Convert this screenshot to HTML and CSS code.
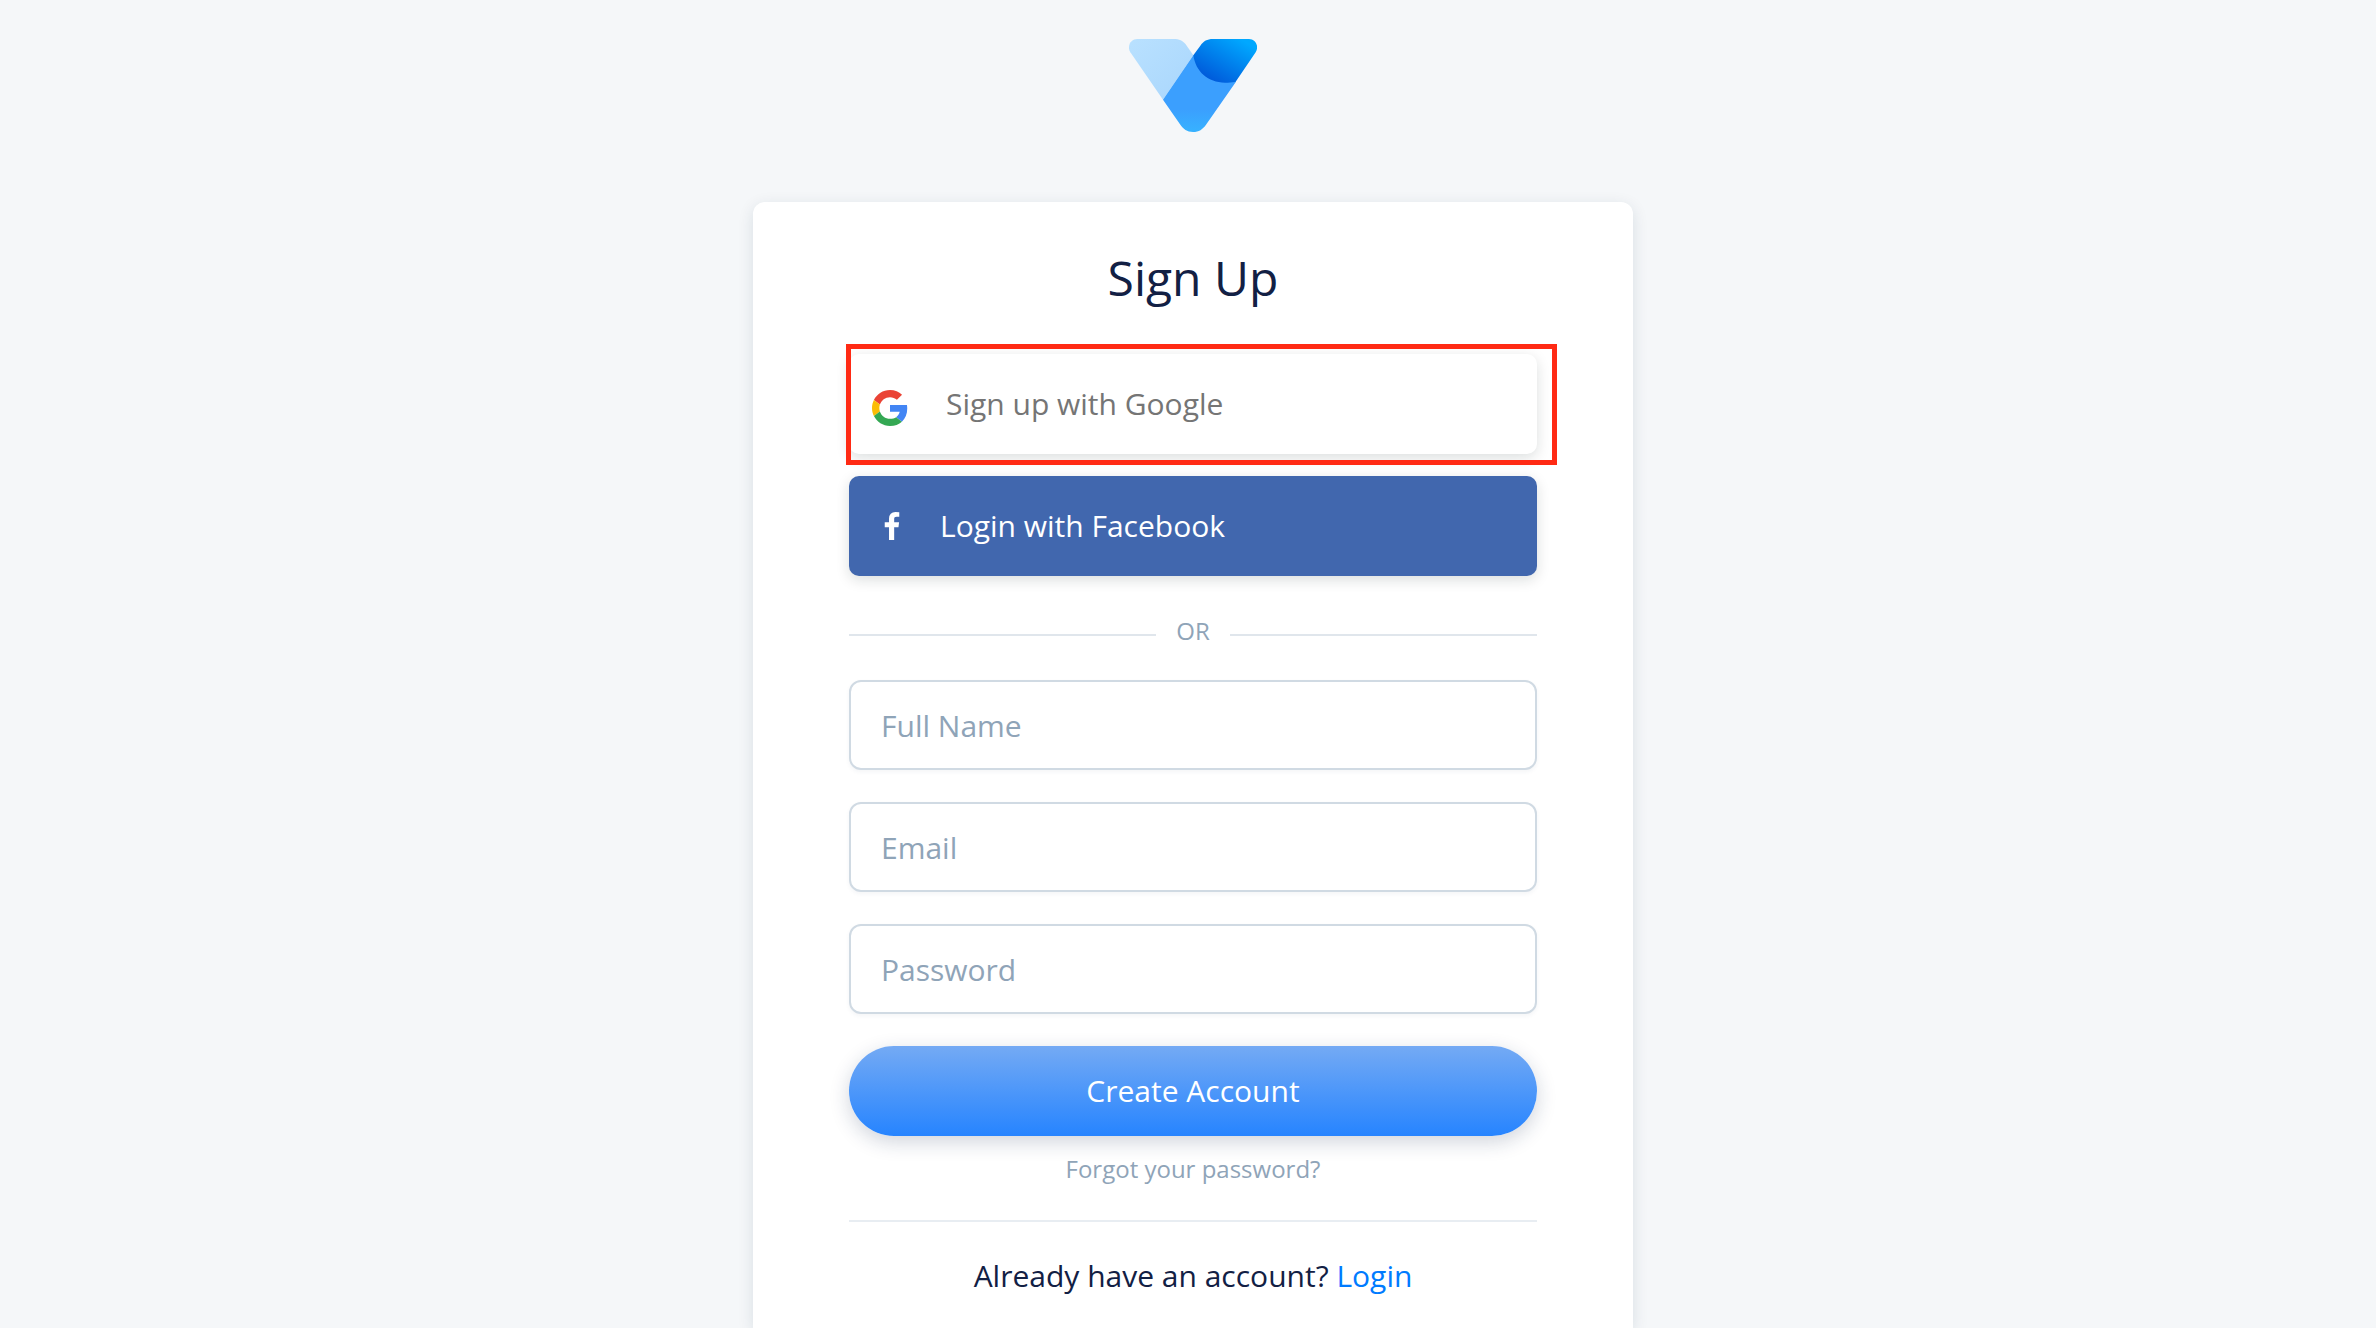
FILE: index.html
```html
<!DOCTYPE html>
<html lang="en">
<head>
  <meta charset="UTF-8">
  <meta name="viewport" content="width=device-width, initial-scale=1.0">
  <title>Sign Up</title>
  <link rel="stylesheet" href="styles.css">
</head>
<body>
  <div class="page">
    <svg class="logo" viewBox="87 57 384 279" aria-hidden="true">
      <defs>
        <linearGradient id="logoLeft" x1="0" y1="0" x2="1" y2="1">
          <stop offset="0" stop-color="#b9e1ff"/>
          <stop offset="1" stop-color="#a9d6fc"/>
        </linearGradient>
        <linearGradient id="logoMain" x1="0" y1="0" x2="0" y2="1">
          <stop offset="0.7" stop-color="#3b9ffe"/>
          <stop offset="1" stop-color="#37b2ff"/>
        </linearGradient>
        <linearGradient id="logoRight" x1="0.2" y1="0.85" x2="0.85" y2="0.1">
          <stop offset="0" stop-color="#005cdb"/>
          <stop offset="1" stop-color="#00a8ff"/>
        </linearGradient>
      </defs>
      <path fill="url(#logoLeft)" d="M112 57H221C238 57 248 62 257 73L280 106L189 239L91 97C80 79 92 57 112 57Z"/>
      <path fill="url(#logoMain)" d="M280 106L189 239L240 313C250 328 261 336 279 336C297 336 308 328 318 314L408 185L370 120Z"/>
      <path fill="url(#logoRight)" d="M280 106L301 77C311 63 321 57 339 57H447C467 57 478 79 467 97L407 185C395 187 386 188 375 188C324 188 287 155 280 106Z"/>
    </svg>

    <main class="card">
      <h1>Sign Up</h1>

      <div class="highlight">
        <button class="social google" type="button">
          <svg viewBox="0 0 48 48" aria-hidden="true">
            <path fill="#EA4335" d="M24 9.5c3.54 0 6.71 1.22 9.21 3.6l6.85-6.85C35.9 2.38 30.47 0 24 0 14.62 0 6.51 5.38 2.56 13.22l7.98 6.19C12.43 13.72 17.74 9.5 24 9.5z"/>
            <path fill="#4285F4" d="M46.98 24.55c0-1.57-.15-3.09-.38-4.55H24v9.02h12.94c-.58 2.96-2.26 5.48-4.78 7.18l7.73 6c4.51-4.18 7.09-10.36 7.09-17.65z"/>
            <path fill="#FBBC05" d="M10.53 28.59c-.48-1.45-.76-2.99-.76-4.59s.27-3.14.76-4.59l-7.98-6.19C.92 16.46 0 20.12 0 24c0 3.88.92 7.54 2.56 10.78l7.97-6.19z"/>
            <path fill="#34A853" d="M24 48c6.48 0 11.93-2.13 15.89-5.81l-7.73-6c-2.15 1.45-4.92 2.3-8.16 2.3-6.26 0-11.57-4.22-13.47-9.91l-7.98 6.19C6.51 42.62 14.62 48 24 48z"/>
          </svg>
          Sign up with Google
        </button>
      </div>

      <button class="social facebook" type="button">
        <svg viewBox="95 0 864 1664" aria-hidden="true">
          <path fill="#fff" d="M959 12v264H802q-86 0-116 36t-30 108v189h293l-39 296H656v759H350V905H95V609h255V391q0-186 104-288.500T731 0q147 0 228 12z"/>
        </svg>
        Login with Facebook
      </button>

      <div class="divider">OR</div>

      <form class="form">
        <input type="text" name="name" placeholder="Full Name" aria-label="Full Name">
        <input type="email" name="email" placeholder="Email" aria-label="Email">
        <input type="password" name="password" placeholder="Password" aria-label="Password">
        <button class="submit" type="submit">Create Account</button>
      </form>

      <a class="forgot" href="#">Forgot your password?</a>
      <p class="login">Already have an account? <a href="#">Login</a></p>
    </main>
  </div>
</body>
</html>
```
FILE: styles.css
```css
* {
  box-sizing: border-box;
}
body {
  margin: 0;
  background: #f5f7f9;
  color: #122044;
  font-family: "Open Sans", sans-serif;
  font-size: 30px;
  font-weight: 500;
  line-height: 42px;
}
.page {
  display: flex;
  flex-direction: column;
  align-items: center;
  min-height: 100vh;
  padding: 39px 0 0 10px;
}
.logo {
  width: 128px;
  height: 93px;
  margin-bottom: 70px;
}
.card {
  flex: 1;
  display: flex;
  flex-direction: column;
  width: 100%;
  max-width: 880px;
  padding: 43px 96px 30px;
  background: #fff;
  border-radius: 12px 12px 0 0;
  box-shadow: 0 4px 16px rgba(20, 50, 70, 0.12);
}
h1 {
  margin: 0 0 43px;
  font-size: 48px;
  font-weight: 500;
  line-height: 66px;
  text-align: center;
}
button,
input {
  font: inherit;
}
button {
  border: none;
  cursor: pointer;
}

/* Social buttons */
.social {
  display: flex;
  align-items: center;
  width: 100%;
  height: 100px;
  padding: 0 24px;
  border-radius: 10px;
  font-weight: 400;
  box-shadow: 0 4px 14px rgba(0, 30, 30, 0.14);
}
.social svg {
  width: 36px;
}
.google {
  gap: 38px;
  padding-left: 23px;
  background: #fff;
  color: #757575;
}
.google svg {
  height: 36px;
  margin-top: 8px;
}
.facebook {
  gap: 30px;
  padding-left: 25px;
  background: #4167ae;
  color: #fff;
}
.facebook svg {
  height: 28px;
}
.highlight {
  position: relative;
  margin-bottom: 22px;
}
.highlight::after {
  content: "";
  position: absolute;
  inset: -10px -20px -11px -3px;
  border: 5px solid #ff2a14;
  pointer-events: none;
}

.divider {
  display: flex;
  gap: 20px;
  margin: 38px 0 32px;
  color: #8fa4b8;
  font-size: 24px;
  line-height: 34px;
}
.divider::before,
.divider::after {
  content: "";
  flex: 1;
  height: 2px;
  margin-top: 20px;
  background: #e0e6ec;
}

/* Form */
.form {
  display: flex;
  flex-direction: column;
  gap: 32px;
}
.form input {
  width: 100%;
  height: 90px;
  padding: 0 30px;
  border: 2px solid #d0dae3;
  border-radius: 12px;
  background: #fff;
  color: #122044;
  outline: none;
  box-shadow: 0 2px 4px rgba(30, 60, 90, 0.05);
}
.form input::placeholder {
  color: #8fa4b8;
  opacity: 1;
}
.submit {
  height: 90px;
  border-radius: 45px;
  background: linear-gradient(to bottom, #74aaf4, #2684ff);
  color: #fff;
  box-shadow: 0 6px 20px rgba(20, 40, 80, 0.2);
}
.forgot {
  align-self: center;
  margin: 16px 0 34px;
  color: #8fa4b8;
  font-size: 24px;
  line-height: 34px;
  text-decoration: none;
}
.login {
  margin: 0;
  padding-top: 33px;
  border-top: 2px solid #e8edf2;
  text-align: center;
}
.login a {
  color: #007bff;
  text-decoration: none;
}
```
